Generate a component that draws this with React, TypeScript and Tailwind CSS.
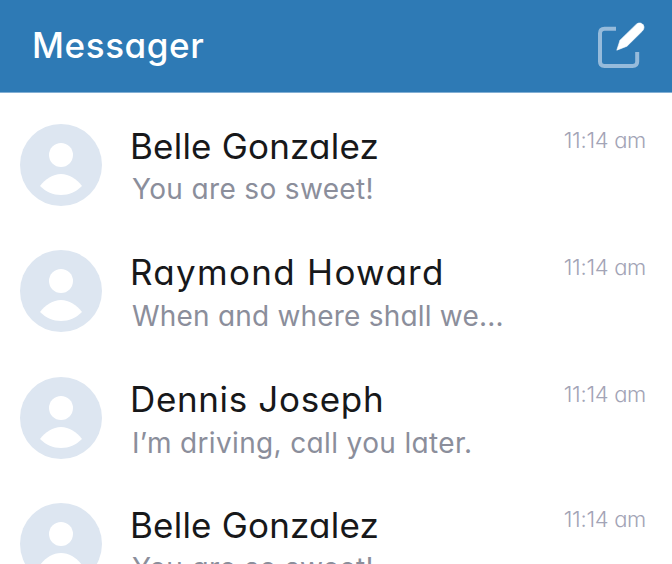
type Message = {
  name: string;
  preview: string;
  time: string;
  row: string;
  nameClass: string;
  previewClass: string;
  timeClass: string;
};

const messages: Message[] = [
  { name: "Belle Gonzalez", preview: "You are so sweet!", time: "11:14 am", row: "h-[126px]", nameClass: "tracking-[0.2px]", previewClass: "mt-[5px] tracking-[0.35px]", timeClass: "mt-[2px]" },
  { name: "Raymond Howard", preview: "When and where shall we...", time: "11:14 am", row: "h-[127px]", nameClass: "tracking-[1.3px]", previewClass: "mt-[6px] tracking-[0.2px]", timeClass: "mt-[3px]" },
  { name: "Dennis Joseph", preview: "I’m driving, call you later.", time: "11:14 am", row: "h-[126px]", nameClass: "tracking-[0.65px]", previewClass: "mt-[6px] tracking-[0.35px]", timeClass: "mt-[3px]" },
  { name: "Belle Gonzalez", preview: "You are so sweet!", time: "11:14 am", row: "h-[126px]", nameClass: "tracking-[0.2px]", previewClass: "mt-[5px] tracking-[0.35px]", timeClass: "mt-[2px]" },
];

function ComposeIcon() {
  return (
    <svg className="h-[50px] w-[50px]" viewBox="0 0 50 50" fill="none">
      <path d="M20 8.7H8.5Q4 8.7 4 13.2V41.5Q4 46 8.5 46H36.5Q41.2 46 41.2 41.5V32" stroke="#96bbdb" strokeWidth="4" />
      <path d="M24 20.2L40.2 4.4C42.4 2.4 45.4 2.6 47 4.6C48.6 6.6 48.2 9 46.4 11L31 26.2L20.8 30.2Z" fill="#fff" stroke="#fff" strokeWidth="0.6" strokeLinejoin="round" />
    </svg>
  );
}

function Avatar() {
  return (
    <svg className="h-[82px] w-[82px] shrink-0" viewBox="0 0 82 82">
      <circle cx="41" cy="41" r="41" fill="#dde6f1" />
      <circle cx="41" cy="31" r="12" fill="#fff" />
      <path d="M20 62C25 55 33 50 41 50S57 55 62 62C56 68 49 71 41 71S26 68 20 62Z" fill="#fff" />
    </svg>
  );
}

export default function App() {
  return (
    <main className="h-[564px] w-[672px] overflow-hidden bg-white font-['Inter',sans-serif] [font-feature-settings:'cv11']">
      <header className="flex h-[93px] items-start justify-between border-b border-[#82afd4] bg-[#2e7ab5] pr-[26px] pl-[32px]">
        <h1 className="mt-[25px] text-[35px] leading-[40px] font-medium tracking-[0.6px] whitespace-nowrap text-white">Messager</h1>
        <div className="mt-[20px]"><ComposeIcon /></div>
      </header>
      <ul className="pt-[31px] pr-[26px] pl-[20px]">
        {messages.map((m, i) => (
          <li key={i} className={`flex items-start ${m.row}`}>
            <Avatar />
            <div className="ml-[28px] min-w-0 flex-1 pt-[2px] whitespace-nowrap">
              <p className={`text-[35px] leading-[40px] font-normal text-[#17181a] ${m.nameClass}`}>{m.name}</p>
              <p className={`ml-[2px] text-[28px] leading-[36px] font-normal text-[#8b8e9b] ${m.previewClass}`}>{m.preview}</p>
            </div>
            <time className={`text-[22px] leading-[28px] font-light tracking-[-0.3px] whitespace-nowrap text-[#a3a4b6] ${m.timeClass}`}>{m.time}</time>
          </li>
        ))}
      </ul>
    </main>
  );
}
